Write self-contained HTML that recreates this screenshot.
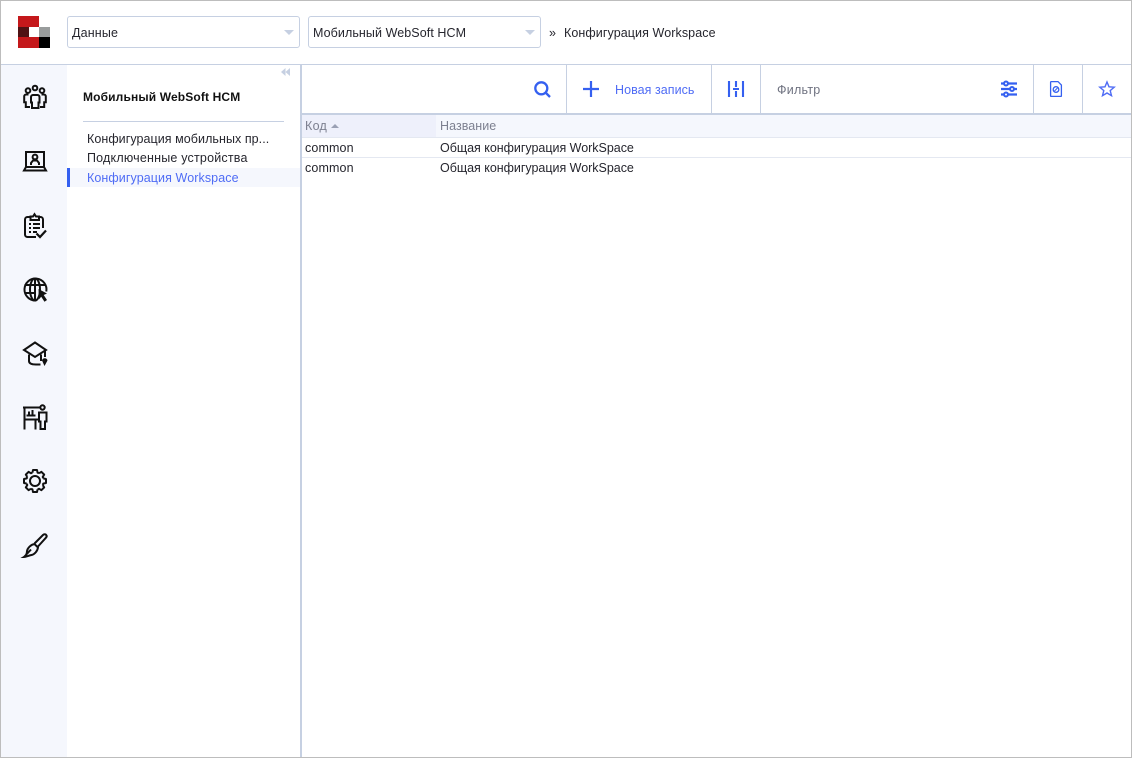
<!DOCTYPE html>
<html lang="ru"><head><meta charset="utf-8"><title>Конфигурация Workspace</title>
<style>
html,body{margin:0;padding:0;background:#fff}
body{width:1132px;height:758px;position:relative;overflow:hidden;font-family:"Liberation Sans","DejaVu Sans",sans-serif;font-size:12.5px;color:#26262e}
.a{position:absolute}
.t{position:absolute;white-space:nowrap;line-height:16px}
.b{background:#c6d0e2}
svg{position:absolute;overflow:visible}
.k{fill:none;stroke:#111;stroke-width:2}
.u{fill:none;stroke:#3560f0;stroke-width:2}
</style></head><body>
<div class="a" style="left:1px;top:65px;width:66px;height:692px;background:#f5f7fd"></div>
<div class="a b" style="left:1px;top:64px;width:1130px;height:1px"></div>
<div class="a b" style="left:300px;top:65px;width:2px;height:692px"></div>
<div class="a b" style="left:302px;top:113px;width:829px;height:2px"></div>

<!-- logo -->
<div class="a" style="left:18px;top:16px;width:21px;height:11px;background:#c4181b"></div>
<div class="a" style="left:18px;top:27px;width:11px;height:10px;background:#4f1214"></div>
<div class="a" style="left:39px;top:27px;width:11px;height:10px;background:#999c9c"></div>
<div class="a" style="left:18px;top:37px;width:21px;height:11px;background:#c4181b"></div>
<div class="a" style="left:39px;top:37px;width:11px;height:11px;background:#000"></div>

<!-- selects -->
<div class="a" style="left:67px;top:16px;width:231px;height:30px;border:1px solid #c6d0e2;border-radius:3px"></div>
<div class="t" style="left:72px;top:25px;letter-spacing:.15px">Данные</div>
<svg style="left:284px;top:30px" width="11" height="5"><path d="M0 0H10L5 5Z" fill="#c6d0e2"/></svg>
<div class="a" style="left:308px;top:16px;width:231px;height:30px;border:1px solid #c6d0e2;border-radius:3px"></div>
<div class="t" style="left:313px;top:25px;letter-spacing:.08px">Мобильный WebSoft HCM</div>
<svg style="left:525px;top:30px" width="11" height="5"><path d="M0 0H10L5 5Z" fill="#c6d0e2"/></svg>
<div class="t" style="left:549px;top:25px">»</div>
<div class="t" style="left:564px;top:25px;letter-spacing:.09px">Конфигурация Workspace</div>

<!-- rail icons -->
<svg style="left:23px;top:84px" width="24" height="26" class="k" viewBox="0 0 24 26"><circle cx="12" cy="4" r="2.300"/><circle cx="5" cy="6.600" r="2.300"/><circle cx="19" cy="6.600" r="2.300"/><path d="M9.500 11h5a2 2 0 0 1 2 2v5.500h-1V24h-6.500v-5.500h-1V13a2 2 0 0 1 2-2zM5.500 10.500H3a1.800 1.800 0 0 0-1.800 1.800v6h1.600V23H7M18.500 10.500H21a1.800 1.800 0 0 1 1.800 1.800v6h-1.600V23H17"/></svg>
<svg style="left:23px;top:150px" width="24" height="22" class="k" viewBox="0 0 24 22"><path d="M3 17V2h18v15M1 20.500l2-3.500h18l2 3.500z"/><circle cx="12" cy="7" r="2.400"/><path d="M8 15v-2l2-2.500h4l2 2.500v2"/></svg>
<svg style="left:24px;top:213px" width="23" height="26" class="k" viewBox="0 0 23 26"><path d="M6 4H3.500a2.500 2.500 0 0 0-2.500 2.500V21.500A2.500 2.500 0 0 0 3.500 24H12M15.500 4h1A2.500 2.500 0 0 1 19 6.500V15"/><path d="M6.500 7V3.500H9l1.500-2.300L12 3.500h3V7z"/><path d="M5 11h2M9 11h7M5 15h2M9 15h7M5 19h2M9 19h4"/><path d="M12.500 20.500l3.500 3.500 6-6.500" stroke-width="2.200"/></svg>
<svg style="left:23px;top:277px" width="25" height="26" class="k" viewBox="0 0 25 26"><path d="M13 23.500a11 11 0 1 1 10.300-9M1.500 8h21M1.500 16h11"/><ellipse cx="12" cy="12.500" rx="5" ry="11"/><path d="M12 1.500v22"/><path d="M15.500 12l8.500 4.500-3.300 1.500 3.300 5-2.500 1.800-3.300-5-2.200 2.500z" fill="#111" stroke="none"/></svg>
<svg style="left:23px;top:341px" width="25" height="26" class="k" viewBox="0 0 25 26"><path d="M12 1.500L1 9l11 7 11-7zM6 13.500V20c0 2.500 3 3.500 7 3.500h4.500M18 13.500V20M22 10v6"/><path d="M19 19.500a2.800 2.800 0 0 1 5.500 0L21.500 25z" fill="#111" stroke="none"/></svg>
<svg style="left:23px;top:404px" width="25" height="26" class="k" viewBox="0 0 25 26"><path d="M0 3.500h17M1.500 3.500v22M1.500 15.500h13.500M3.500 11.500h9M6 11.500V7.500M9.500 11.500V6M12.500 15.500V25.500"/><circle cx="19.500" cy="3.500" r="2.200"/><path d="M16 8.500h7.500v9H22v7.500h-4.500v-7.500h-1.500z"/></svg>
<svg style="left:23px;top:469px" width="24" height="24" class="k" viewBox="-12 -12 24 24"><g id="g" stroke-linejoin="round"><path d="M-2.600-8.300L-2-11H2L2.600-8.300A8.700 8.700 0 0 1 4-7.700"/><path transform="rotate(45)" d="M-2.600-8.300L-2-11H2L2.600-8.300A8.700 8.700 0 0 1 4-7.700"/><path transform="rotate(90)" d="M-2.600-8.300L-2-11H2L2.600-8.300A8.700 8.700 0 0 1 4-7.700"/><path transform="rotate(135)" d="M-2.600-8.300L-2-11H2L2.600-8.300A8.700 8.700 0 0 1 4-7.700"/><path transform="rotate(180)" d="M-2.600-8.300L-2-11H2L2.600-8.300A8.700 8.700 0 0 1 4-7.700"/><path transform="rotate(225)" d="M-2.600-8.300L-2-11H2L2.600-8.300A8.700 8.700 0 0 1 4-7.700"/><path transform="rotate(270)" d="M-2.600-8.300L-2-11H2L2.600-8.300A8.700 8.700 0 0 1 4-7.700"/><path transform="rotate(315)" d="M-2.600-8.300L-2-11H2L2.600-8.300A8.700 8.700 0 0 1 4-7.700"/></g><circle r="5"/></svg>
<svg style="left:23px;top:533px" width="24" height="25" class="k" viewBox="0 0 24 25"><path d="M1 24c2.500-1.500 3-3.500 3-6 .5-3 4-6.500 7.500-7l3.500 3.500c-.5 3.500-3.500 7-6.500 7.500-3 .6-5.500 2-7.500 2zM11.500 10.500L20 2c1-1 2.500-1 3.200 0 .7.800.5 2-.5 3L15 13.500M1 24l7-7.500"/></svg>

<!-- panel -->
<svg style="left:281px;top:68px" width="9" height="8"><path d="M4.500 0v8L0 4zM9 0v8L4.500 4z" fill="#c6d0e2"/></svg>
<div class="t" style="left:83px;top:89px;font-weight:bold;color:#111;font-size:12px;letter-spacing:.14px">Мобильный WebSoft HCM</div>
<div class="a b" style="left:83px;top:121px;width:201px;height:1px"></div>
<div class="t" style="left:87px;top:131px;letter-spacing:.06px">Конфигурация мобильных пр...</div>
<div class="t" style="left:87px;top:150px;letter-spacing:.2px">Подключенные устройства</div>
<div class="a" style="left:67px;top:168px;width:233px;height:19px;background:#f5f7fd"></div>
<div class="a" style="left:67px;top:168px;width:3px;height:19px;background:#3560f0"></div>
<div class="t" style="left:87px;top:170px;letter-spacing:.09px;color:#4f6cf5">Конфигурация Workspace</div>

<!-- toolbar -->
<div class="a b" style="left:566px;top:65px;width:1px;height:48px"></div>
<div class="a b" style="left:711px;top:65px;width:1px;height:48px"></div>
<div class="a b" style="left:760px;top:65px;width:1px;height:48px"></div>
<div class="a b" style="left:1033px;top:65px;width:1px;height:48px"></div>
<div class="a b" style="left:1082px;top:65px;width:1px;height:48px"></div>
<svg style="left:534px;top:81px" width="17" height="17" class="u" viewBox="0 0 17 17"><circle cx="7.300" cy="7.300" r="6" stroke-width="2.300"/><path d="M11.500 11.500l4.500 4.500" stroke-width="2.300"/></svg>
<svg style="left:583px;top:81px" width="16" height="16" class="u" viewBox="0 0 16 16"><path d="M8 0v16M0 8h16" stroke-width="2.200"/></svg>
<div class="t" style="left:615px;top:82px;color:#4f6cf5;letter-spacing:.05px">Новая запись</div>
<svg style="left:728px;top:81px" width="17" height="16" class="u" viewBox="0 0 17 16"><path d="M1 0v16M15 0v16M8 0v6M8 10v6M5 8h6" stroke-width="2.100"/></svg>
<div class="t" style="left:777px;top:82px;color:#6f7280;letter-spacing:.25px">Фильтр</div>
<svg style="left:1001px;top:81px" width="16" height="16" class="u" viewBox="0 0 16 16"><path d="M0 2.500h16M0 8h16M0 13.500h16" stroke-width="2.200"/><g fill="#fff" stroke-width="2"><circle cx="5" cy="2.500" r="2"/><circle cx="11" cy="8" r="2"/><circle cx="5" cy="13.500" r="2"/></g></svg>
<svg style="left:1050px;top:81px" width="12" height="16" class="u" viewBox="0 0 12 16"><path stroke-width="1.300" d="M.6 1.300a.7.700 0 0 1 .7-.7h6.700l3.400 3.400v10.700a.7.700 0 0 1-.7.700H1.300a.7.700 0 0 1-.7-.7z"/><circle cx="6" cy="8.500" r="2.800" stroke-width="1.300"/><path d="M4.500 10l3-3" stroke-width="1"/></svg>
<svg style="left:1099px;top:81px" width="16" height="16" class="u" viewBox="0 0 16 16"><path stroke-width="1.400" stroke="#4f6cf5" d="M8 1l2 4.800 5.200.4-4 3.400 1.300 5.100L8 12l-4.500 2.700 1.300-5.100-4-3.400L6 5.800z"/></svg>

<!-- table -->
<div class="a" style="left:302px;top:115px;width:829px;height:22px;background:#f5f7fd"></div>
<div class="a" style="left:302px;top:115px;width:134px;height:22px;background:#eef0fb"></div>
<div class="a" style="left:302px;top:137px;width:829px;height:1px;background:#e4e8f1"></div>
<div class="a" style="left:302px;top:157px;width:829px;height:1px;background:#e4e8f1"></div>
<div class="t" style="left:305px;top:118px;color:#7d8090;letter-spacing:.3px">Код</div>
<svg style="left:331px;top:124px" width="8" height="4"><path d="M0 4L4 0l4 4z" fill="#9aa0b4"/></svg>
<div class="t" style="left:440px;top:118px;color:#7d8090;letter-spacing:.05px">Название</div>
<div class="t" style="left:305px;top:140px;letter-spacing:.13px">common</div>
<div class="t" style="left:440px;top:140px;letter-spacing:-.02px">Общая конфигурация WorkSpace</div>
<div class="t" style="left:305px;top:160px;letter-spacing:.13px">common</div>
<div class="t" style="left:440px;top:160px;letter-spacing:-.02px">Общая конфигурация WorkSpace</div>

<!-- outer border -->
<div class="a" style="left:0;top:0;width:1130px;height:756px;border:1px solid #bdbdbd"></div>
</body></html>
